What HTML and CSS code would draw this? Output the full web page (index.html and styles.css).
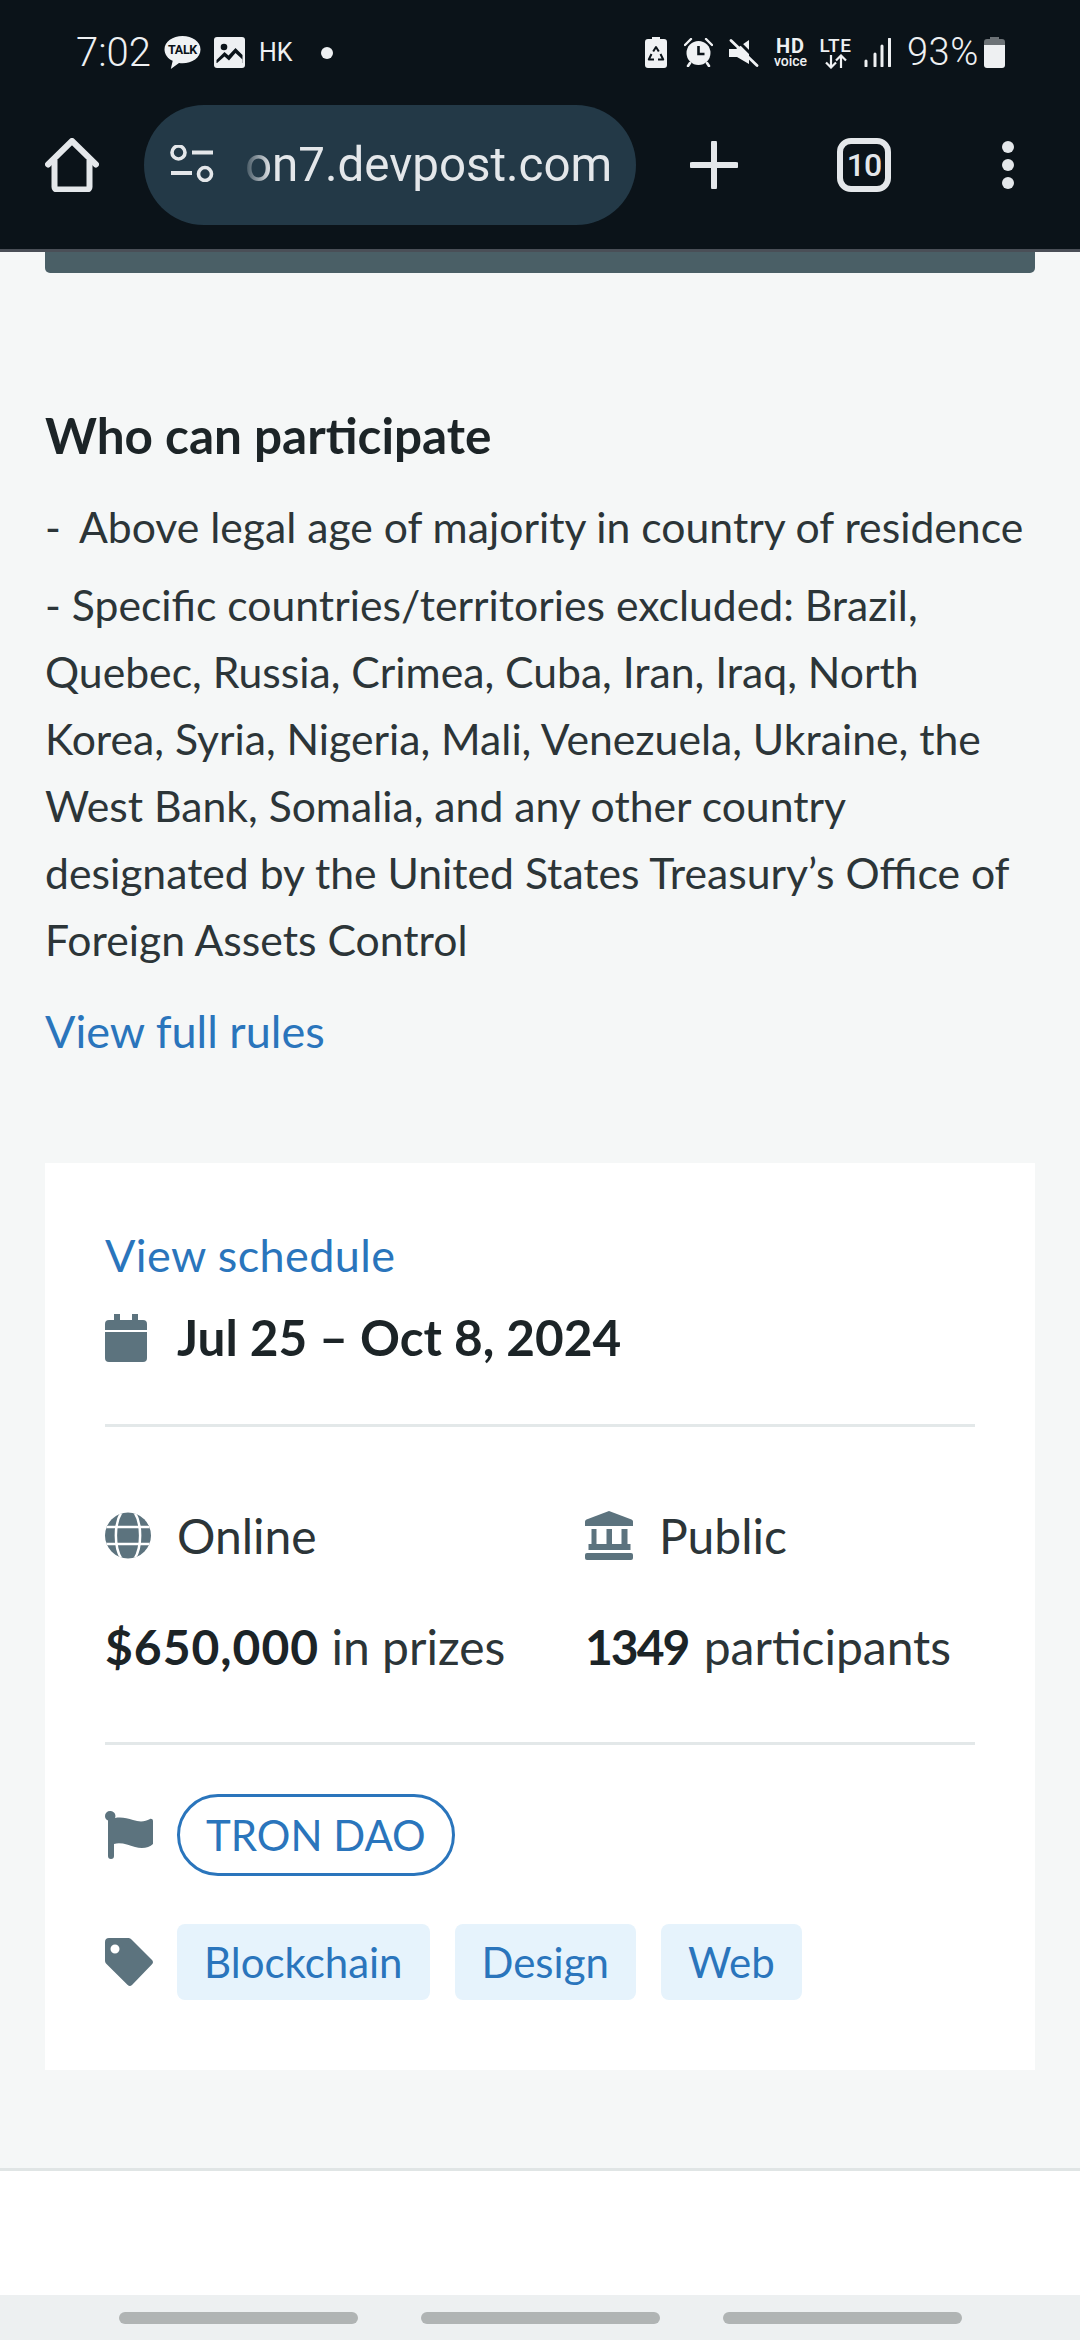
FILE: index.html
```html
<!DOCTYPE html>
<html lang="en">
<head>
<meta charset="utf-8">
<title>Who can participate</title>
<link rel="stylesheet" href="styles.css">
</head>
<body>
<header class="chrome">
  <div class="status">
    <div class="status-left">
      <span class="time">7:02</span>
      <svg class="i-talk" viewBox="0 0 37 35"><path d="M18.500 1C8.800 1 .5 6.500 .5 14.500c0 5 3.500 9.300 8.200 11.300L6.800 34l8.200-6c1.100.2 2.300.3 3.500.3 9.700 0 18-5.800 18-13.800S28.200 1 18.500 1z" fill="#f0f2f4"/><text x="18.500" y="19" text-anchor="middle" class="talk-text">TALK</text></svg>
      <svg class="i-img" viewBox="0 0 31 31"><rect width="31" height="31" rx="3" fill="#eef0f2"/><path d="M2.500 26v-3l8-8 4 3.500 7-7.500 7 7v8z" fill="#0b1319"/><path d="M2.500 28v-1.500l8-7 4.500 4 6.500-7.500 7 6.500V28z" fill="#eef0f2"/><circle cx="10" cy="10" r="3.300" fill="#0b1319"/></svg>
      <span class="hk">HK</span>
      <span class="dot"></span>
    </div>
    <div class="status-right">
      <svg class="i-recycle" viewBox="0 0 22 31"><path d="M7 0h8v2h4a3 3 0 0 1 3 3v23a3 3 0 0 1-3 3H3a3 3 0 0 1-3-3V5a3 3 0 0 1 3-3h4z" fill="#f0f2f4"/><path d="M8.200 14.500L11 10l2.800 4.500M15.500 17l2.700 5.500H13M9 22.500H3.800L6.500 17" fill="none" stroke="#0b1319" stroke-width="2" stroke-linejoin="round"/></svg>
      <svg class="i-alarm" viewBox="0 0 29 29"><circle cx="14.500" cy="15" r="12" fill="#f0f2f4"/><path d="M14.500 8v8h6" fill="none" stroke="#0b1319" stroke-width="2.600"/><path d="M1 7l6-6M28 7l-6-6" stroke="#f0f2f4" stroke-width="2.400" stroke-linecap="round"/><path d="M6 25l-2 3M23 25l2 3" stroke="#f0f2f4" stroke-width="2.600" stroke-linecap="round"/></svg>
      <svg class="i-mute" viewBox="0 0 30 28"><path d="M0 10h7L20 1v24L8 18H0z" fill="#f0f2f4"/><path d="M6 -1L31 24" stroke="#0b1319" stroke-width="3"/><path d="M2 1.500L28 26.500" stroke="#f0f2f4" stroke-width="2.800" stroke-linecap="round"/></svg>
      <span class="hd"><b>HD</b><small>voice</small></span>
      <span class="lte"><b>LTE</b><svg class="i-arrows" viewBox="0 0 28 15"><path d="M9 1v12M4 8.500L9 13.500 14 8.500M19 14V2M14 6.500L19 1.500 24 6.500" fill="none" stroke="#f0f2f4" stroke-width="2.200"/></svg></span>
      <svg class="i-signal" viewBox="0 0 27 29"><path d="M2 23v5M11 16v12M18 8v20M25.500 1v27" stroke="#eef0f2" stroke-width="3" stroke-linecap="round"/></svg>
      <span class="pct">93%</span>
      <svg class="i-batt" viewBox="0 0 21 31"><path d="M6 0h9v2h3a3 3 0 0 1 3 3v4H0V5a3 3 0 0 1 3-3h3z" fill="#6c7276"/><path d="M0 8h21v20a3 3 0 0 1-3 3H3a3 3 0 0 1-3-3z" fill="#eef0f2"/></svg>
    </div>
  </div>
  <div class="nav">
    <svg class="i-home" viewBox="0 0 54 54"><path d="M3 26.500L27 3l24 23.500" fill="none" stroke="#e4e7ea" stroke-width="6" stroke-linecap="round" stroke-linejoin="round"/><path d="M9.500 22v27c0 1.500 1 2.500 2.500 2.500h30c1.500 0 2.500-1 2.500-2.500V22" fill="none" stroke="#e4e7ea" stroke-width="6"/></svg>
    <div class="pill">
      <svg class="i-tune" viewBox="0 0 44 37"><circle cx="8.500" cy="7.500" r="6.500" fill="none" stroke="#e4e7ea" stroke-width="3.600"/><path d="M22 7.500h21M1 28h21" stroke="#e4e7ea" stroke-width="4"/><circle cx="35" cy="29" r="6.500" fill="none" stroke="#e4e7ea" stroke-width="3.600"/></svg>
      <span class="url">on7.devpost.com</span>
    </div>
    <svg class="i-plus" viewBox="0 0 48 48"><path d="M24 2v44M2 24h44" stroke="#e4e7ea" stroke-width="6" stroke-linecap="round"/></svg>
    <div class="tabs">10</div>
    <div class="kebab"><span></span><span></span><span></span></div>
  </div>
</header>

<main class="content">
  <div class="cut-button"></div>
  <h2 class="title">Who can participate</h2>
  <p class="para first"><span class="dash">-</span>Above legal age of majority in country of residence</p>
  <p class="para second">- Specific countries/territories excluded: Brazil,<br>Quebec, Russia, Crimea, Cuba, Iran, Iraq, North<br>Korea, Syria, Nigeria, Mali, Venezuela, Ukraine, the<br>West Bank, Somalia, and any other country<br>designated by the United States Treasury’s Office of<br>Foreign Assets Control</p>
  <a class="link rules">View full rules</a>

  <section class="card">
    <a class="link schedule">View schedule</a>
    <div class="row date-row">
      <svg class="i-cal" viewBox="0 0 42 48"><path d="M9 0h6v6h12V0h6v6h5a4 4 0 0 1 4 4v6H0v-6a4 4 0 0 1 4-4h5z" fill="#5c737e"/><path d="M0 18h42v26a4 4 0 0 1-4 4H4a4 4 0 0 1-4-4z" fill="#5c737e"/></svg>
      <strong class="date">Jul 25 – Oct 8, 2024</strong>
    </div>
    <hr class="rule rule-a">
    <div class="facts">
      <div class="row"><svg class="i-globe" viewBox="0 0 46 47"><defs><clipPath id="gc"><circle cx="23" cy="23.500" r="23"/></clipPath></defs><g clip-path="url(#gc)"><rect width="46" height="47" fill="#5c737e"/><path d="M0 15h46M0 32h46" stroke="#fff" stroke-width="2.500"/><path d="M16.500 0C9 12 9 35 16.500 47M29.500 0C37 12 37 35 29.500 47" fill="none" stroke="#fff" stroke-width="2.500"/></g></svg><span>Online</span></div>
      <div class="row"><svg class="i-bank" viewBox="0 0 48 49"><path d="M24 0l22.500 8.500c1 .5 1.500 1 1.500 2.500v4H0v-4c0-1.500.5-2 1.500-2.500z" fill="#5c737e"/><path d="M6.500 18h5v15h-5zM21.500 18h5.500v15h-5.500zM36.500 18h6v15h-6z" fill="#5c737e"/><rect x="3.500" y="33" width="42" height="6" fill="#5c737e"/><rect y="42" width="48" height="7" rx="2" fill="#5c737e"/></svg><span>Public</span></div>
      <div class="fact prize"><b>$650,000</b> in prizes</div>
      <div class="fact count"><b>1349</b> participants</div>
    </div>
    <hr class="rule rule-b">
    <div class="row host-row">
      <svg class="i-flag" viewBox="0 0 48 48"><path d="M5 0a5 5 0 0 1 5 7c6-1 12 0 18 2 6 2 12 2 17-1 1.500-.5 3 .5 3 2v23c-4 4-11 5-18 3-7-2-14-5-21-3v12a3 3 0 0 1-6 0V9.500C1 8.500 0 7 0 5a5 5 0 0 1 5-5z" fill="#5c737e"/></svg>
      <a class="host">TRON DAO</a>
    </div>
    <div class="row tag-row">
      <svg class="i-tag" viewBox="0 0 48 48"><path fill-rule="evenodd" d="M4 0h19c1.500 0 2.500.5 3.500 1.500L47 22c1.300 1.300 1.300 3 0 4.300L27 47c-1.300 1.300-3 1.300-4.300 0L1.500 26C.5 25 0 24 0 22.500V4c0-2.500 1.500-4 4-4zm6 6.500a4.500 4.500 0 1 0 0 9 4.500 4.500 0 0 0 0-9z" fill="#5c737e"/></svg>
      <div class="tags"><a class="tag">Blockchain</a><a class="tag">Design</a><a class="tag">Web</a></div>
    </div>
  </section>
</main>

<footer class="foot"></footer>
<nav class="gesture"><span></span><span></span><span></span></nav>
</body>
</html>
```

FILE: styles.css
```css
* { box-sizing: border-box; }
html, body { margin: 0; padding: 0; }
body {
  width: 1080px;
  height: 2340px;
  overflow: hidden;
  background: #f5f7f7;
  font-family: "Lato", "Liberation Sans", sans-serif;
  color: #2c3538;
  display: flex;
  flex-direction: column;
}
svg { display: block; flex: none; }

.chrome { height: 252px; background: #0b1319; border-bottom: 3px solid #4a4f57; flex: none; }
.status { height: 105px; display: flex; justify-content: space-between; align-items: flex-start; padding: 35px 75px 0 76px; color: #eef0f2; font-family: "Roboto", sans-serif; }
.status-left, .status-right { display: flex; align-items: center; height: 35px; }
.time { font-size: 40px; font-weight: 300; width: 88px; line-height: 35px; }
.i-talk { width: 37px; height: 35px; }
.talk-text { font: 700 12.500px "Roboto", sans-serif; fill: #0b1319; letter-spacing: -.3px; }
.i-img { width: 31px; height: 31px; margin-left: 13px; }
.hk { font-size: 25px; font-weight: 400; margin-left: 14px; width: 34px; }
.dot { width: 12px; height: 12px; border-radius: 50%; background: #eef0f2; margin-left: 28px; }
.i-recycle { width: 22px; height: 31px; }
.i-alarm { width: 29px; height: 29px; margin-left: 17px; }
.i-mute { width: 30px; height: 28px; margin-left: 16px; }
.hd { display: flex; flex-direction: column; align-items: center; width: 33px; margin-left: 15px; line-height: 1; }
.hd b { font-size: 20px; font-weight: 700; line-height: 17px; letter-spacing: 1px; }
.hd small { font-size: 14px; font-weight: 500; line-height: 12px; }
.lte { display: flex; flex-direction: column; align-items: center; width: 33px; margin-left: 12px; }
.lte b { font-size: 19px; font-weight: 500; line-height: 17px; letter-spacing: .5px; }
.i-arrows { width: 28px; height: 15px; }
.i-signal { width: 27px; height: 29px; margin-left: 12px; }
.pct { font-size: 38px; font-weight: 300; margin-left: 16px; width: 70px; line-height: 35px; letter-spacing: .5px; }
.i-batt { width: 21px; height: 31px; margin-left: 7px; }

.nav { height: 144px; display: flex; align-items: flex-start; }
.i-home { width: 54px; height: 54px; margin: 33px 0 0 45px; }
.pill { width: 492px; height: 120px; margin-left: 45px; border-radius: 60px; background: #233947; display: flex; align-items: center; }
.i-tune { width: 44px; height: 37px; margin: -3px 0 0 26px; }
.url { font: 400 47.500px "Roboto", sans-serif; color: #e4e7ea; margin-left: 31px; -webkit-mask-image: linear-gradient(90deg, rgba(0,0,0,.15), #000 26px); mask-image: linear-gradient(90deg, rgba(0,0,0,.15), #000 26px); }
.i-plus { width: 48px; height: 48px; margin: 36px 0 0 54px; }
.tabs { width: 54px; height: 54px; margin: 33px 0 0 99px; border: 6px solid #e4e7ea; border-radius: 14px; color: #e4e7ea; font: 500 32px/42px "Roboto", sans-serif; text-align: center; letter-spacing: -1px; }
.kebab { display: flex; flex-direction: column; gap: 6px; margin: 36px 0 0 111px; }
.kebab span { width: 12px; height: 12px; border-radius: 50%; background: #e4e7ea; }

.content { flex: 1; display: flex; flex-direction: column; padding: 0 45px; }
.cut-button { height: 21px; background: #4a5f66; border-radius: 0 0 5px 5px; }
.title { margin: 132px 0 0; font-size: 49.500px; font-weight: 700; line-height: 60px; color: #1c2427; }
.para { margin: 0; font-size: 42.700px; line-height: 67px; white-space: nowrap; }
.dash { display: inline-block; width: 34px; }
.first { margin-top: 28px; }
.second { margin-top: 11px; }
.link { display: block; font-size: 45px; line-height: 67px; color: #2a75bc; }
.rules { margin-top: 25px; }
.schedule { letter-spacing: .4px; }

.card { margin-top: 98px; height: 907px; background: #fff; padding: 59px 60px 0; display: flex; flex-direction: column; }
.row { display: flex; align-items: center; }
.date-row { margin-top: 15px; height: 67px; }
.i-cal { width: 42px; height: 48px; margin-right: 30px; }
.date { font-size: 49.500px; font-weight: 700; line-height: 67px; color: #1c2427; }
.rule { width: 100%; height: 3px; border: 0; margin: 0; background: #e3e8e9; flex: none; }
.rule-a { margin-top: 53px; }
.facts { margin-top: 75px; display: grid; grid-template-columns: 480px 1fr; row-gap: 44px; font-size: 48px; line-height: 67px; }
.i-globe { width: 46px; height: 47px; margin-right: 26px; }
.i-bank { width: 48px; height: 49px; margin-right: 26px; }
.fact b { color: #1c2427; }
.prize b { letter-spacing: 1px; }
.count b { letter-spacing: -2px; margin-right: 3px; }
.rule-b { margin-top: 62px; }
.host-row { margin-top: 49px; height: 82px; }
.i-flag { width: 48px; height: 48px; margin-right: 24px; }
.host { height: 82px; padding: 0 26px; border: 3px solid #2a75bc; border-radius: 41px; color: #2a75bc; font-size: 42px; line-height: 76px; }
.tag-row { margin-top: 48px; height: 76px; }
.i-tag { width: 48px; height: 48px; margin-right: 24px; }
.tags { display: flex; gap: 25px; }
.tag { height: 76px; padding: 0 27px; border-radius: 8px; background: #e6f3fc; color: #2a75bc; font-size: 42px; line-height: 76px; }

.foot { height: 127px; background: #fff; border-top: 3px solid #e0e5e5; flex: none; }
.gesture { height: 45px; flex: none; background: #edf0f1; display: flex; justify-content: center; gap: 63px; padding-top: 17px; }
.gesture span { width: 239px; height: 12px; border-radius: 6px; background: #b0b4b4; }
```
